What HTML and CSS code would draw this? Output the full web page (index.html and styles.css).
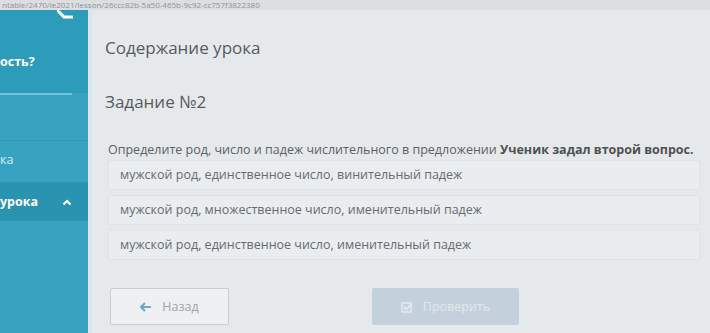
FILE: index.html
```html
<!DOCTYPE html>
<html lang="ru">
<head>
    <meta charset="UTF-8">
    <meta name="viewport" content="width=device-width, initial-scale=1.0">
    <title>Содержание урока</title>
    <link rel="stylesheet" href="styles.css">
</head>
<body>
    <!-- адресная строка -->
    <div class="url-bar">
        <span class="url-text">ntable/2470/le2021/lesson/26ccc82b-5a50-465b-9c92-cc757f3822380</span>
    </div>

    <div class="layout">
        <aside class="sidebar">
            <div class="side-head">
                <svg class="back-icon" width="16" height="10" viewBox="0 0 16 10">
                    <path d="M1 1 L7 7 L15 7" stroke="#ffffff" stroke-width="3" fill="none" stroke-linecap="round"/>
                </svg>
            </div>
            <div class="side-title">ость?</div>
            <div class="side-progress"></div>
            <div class="side-item">ка</div>
            <div class="side-item active">
                <span>урока</span>
                <svg class="chevron" width="10" height="7" viewBox="0 0 10 7">
                    <path d="M1.5 5.5 L5 2 L8.5 5.5" stroke="#ffffff" stroke-width="2.2" fill="none"/>
                </svg>
            </div>
        </aside>

        <main class="content">
            <h1 class="page-title">Содержание урока</h1>
            <h2 class="task-title">Задание №2</h2>

            <p class="question">Определите род, число и падеж числительного в предложении <b>Ученик задал второй вопрос.</b></p>

            <div class="options">
                <div class="option">мужской род, единственное число, винительный падеж</div>
                <div class="option">мужской род, множественное число, именительный падеж</div>
                <div class="option">мужской род, единственное число, именительный падеж</div>
            </div>

            <div class="actions">
                <button class="btn btn-back">
                    <svg width="12" height="10" viewBox="0 0 12 10">
                        <path d="M5 1 L1 5 L5 9 M1.5 5 L11 5" stroke="#6ea7d0" stroke-width="2.2" fill="none"/>
                    </svg>
                    Назад
                </button>
                <button class="btn btn-check">
                    <svg width="12" height="12" viewBox="0 0 12 12">
                        <rect x="1" y="2" width="9" height="9" stroke="#e3eaf0" stroke-width="1.5" fill="none"/>
                        <path d="M3 6 L5.5 8.5 L11 2" stroke="#e3eaf0" stroke-width="1.8" fill="none"/>
                    </svg>
                    Проверить
                </button>
            </div>
        </main>
    </div>
</body>
</html>
```

FILE: styles.css
```css
body {
    margin: 0;
    width: 710px;
    height: 333px;
    overflow: hidden;
    font-family: 'Open Sans', 'Noto Sans', sans-serif;
    background: #e6e9eb;
}

.url-bar {
    height: 10px;
    padding-left: 2px;
    background: #dcdfe2;
    overflow: hidden;
    white-space: nowrap;
}

.url-text {
    display: block;
    font-size: 8px;
    line-height: 10px;
    color: #8d9296;
}

.layout {
    display: flex;
    height: 323px;
}

.sidebar {
    width: 88px;
    flex-shrink: 0;
    background: #37a3c1;
    border-right: 4px solid #dbe6ea;
    display: flex;
    flex-direction: column;
}

.side-head {
    height: 40px;
    background: #2d9bba;
    position: relative;
}

.back-icon {
    position: absolute;
    top: 0;
    left: 57px;
}

.side-title {
    background: #2d9bba;
    color: #ffffff;
    font-size: 12.5px;
    font-weight: 700;
    line-height: 24px;
    height: 43px;
}

.side-progress {
    height: 2px;
    width: 72px;
    background: #6cc3da;
    margin-bottom: 45px;
}

.side-item {
    border-top: 1px solid #2f97b4;
    height: 41px;
    line-height: 38px;
    font-size: 12.5px;
    color: #d6eef5;
}

.side-item.active {
    height: 38px;
    background: #2a93b0;
    color: #ffffff;
    font-weight: 700;
    display: flex;
    align-items: center;
    gap: 24px;
}

.content {
    flex: 1;
    padding: 0 0 0 12px;
}

.page-title {
    margin: 26px 0 0 1px;
    font-size: 17px;
    font-weight: 400;
    line-height: 24px;
    color: #565b5f;
}

.task-title {
    margin: 30px 0 0 1px;
    font-size: 17px;
    font-weight: 400;
    line-height: 24px;
    color: #565b5f;
}

.question {
    margin: 28px 0 0 4px;
    font-size: 12.5px;
    line-height: 16px;
    color: #5c6166;
    white-space: nowrap;
}

.question b {
    color: #4c5155;
}

.options {
    margin: 2px 0 0 4px;
    display: flex;
    flex-direction: column;
    gap: 5px;
    width: 592px;
}

.option {
    height: 28px;
    line-height: 28px;
    padding-left: 11px;
    border: 1px solid #e0e3e5;
    background: #eaedef;
    font-size: 12.5px;
    color: #666b70;
}

.actions {
    margin: 28px 0 0 6px;
    display: flex;
    gap: 143px;
}

.btn {
    height: 37px;
    font-family: inherit;
    font-size: 12.5px;
    border-radius: 2px;
    display: flex;
    align-items: center;
    justify-content: center;
    gap: 10px;
}

.btn-back {
    width: 119px;
    background: #eef0f1;
    border: 1px solid #c9ced2;
    color: #9ea3a8;
}

.btn-check {
    width: 147px;
    background: #c4d1dc;
    border: none;
    color: #e1e8ee;
}
```
